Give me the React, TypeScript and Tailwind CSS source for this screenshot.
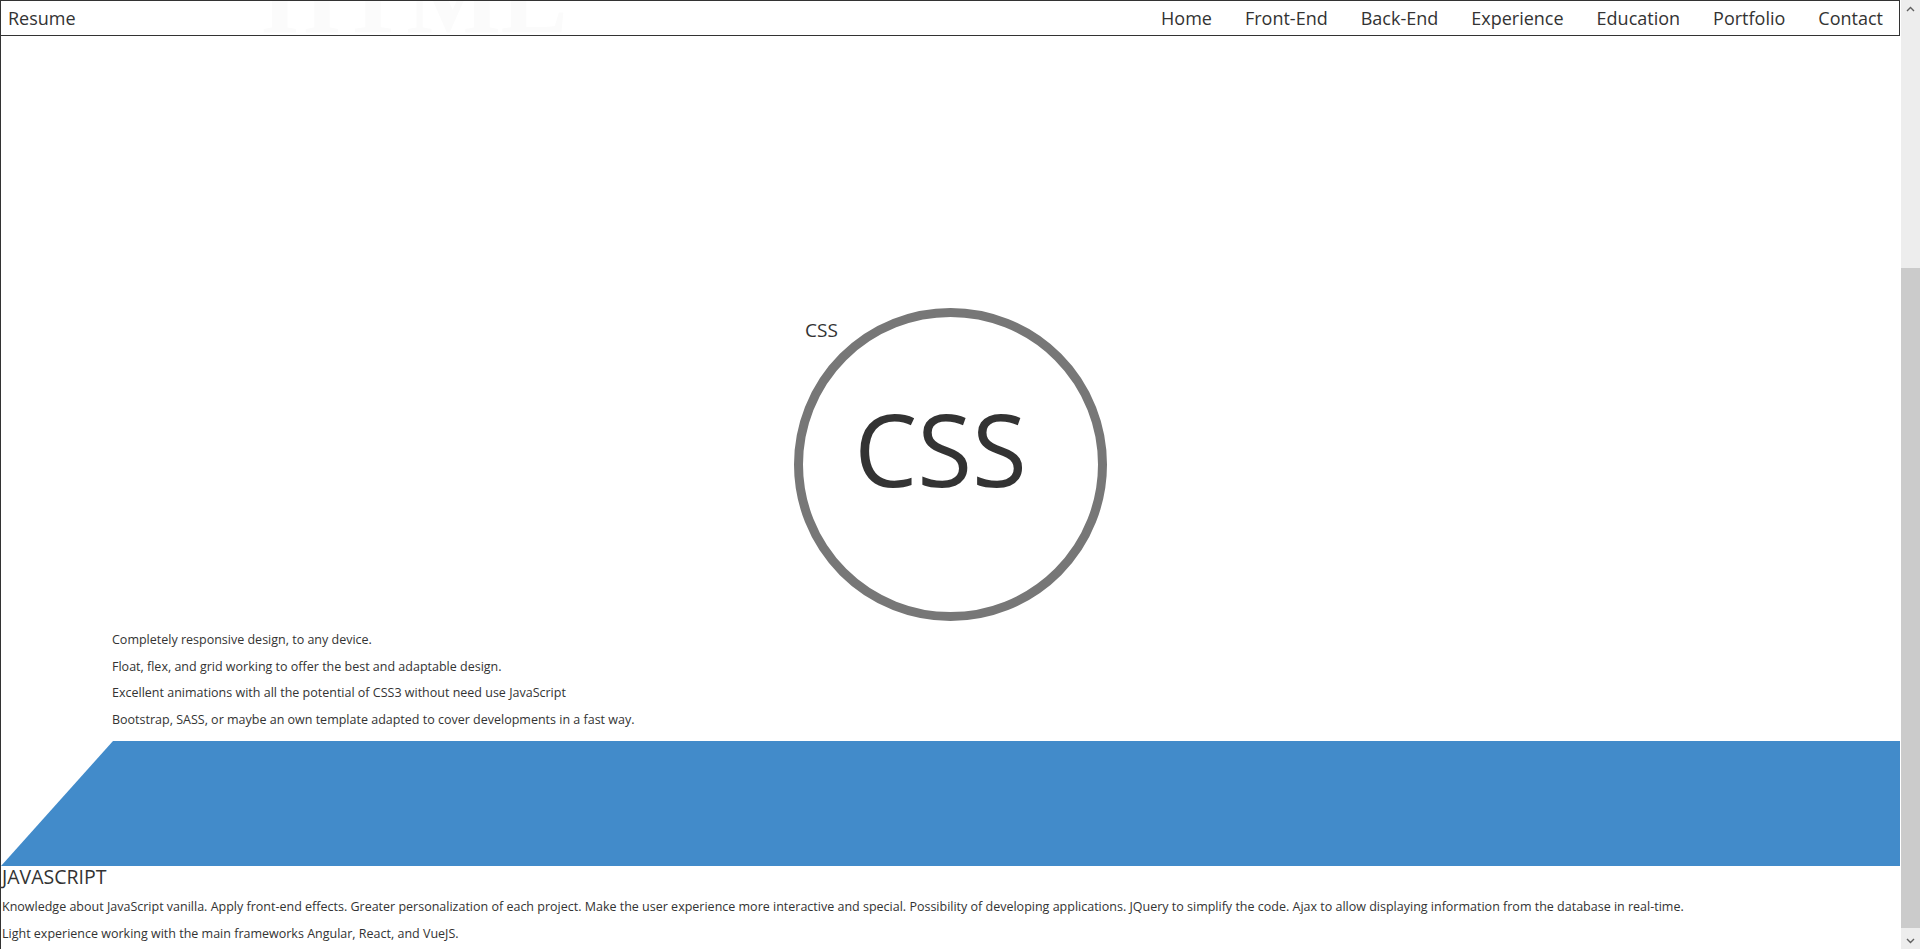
const navLinks = ['Home', 'Front-End', 'Back-End', 'Experience', 'Education', 'Portfolio', 'Contact'];

const cssPoints = [
  'Completely responsive design, to any device.',
  'Float, flex, and grid working to offer the best and adaptable design.',
  'Excellent animations with all the potential of CSS3 without need use JavaScript',
  'Bootstrap, SASS, or maybe an own template adapted to cover developments in a fast way.',
];

const Header = () => (
  <header className="relative h-[36px] border border-[#333] overflow-hidden flex items-center justify-between">
    {/* big section title scrolled under the bar */}
    <span aria-hidden="true" className="absolute left-[261px] top-[-52px] text-[100px] leading-none font-bold text-[#fbfbfb] font-['Liberation_Serif',serif] select-none">
      HTML
    </span>
    <a href="#top" className="relative pl-[7px] text-[18px] text-[#333]">
      Resume
    </a>
    <nav className="relative flex items-center text-[18px] text-[#333]">
      {navLinks.map((link) => (
        <a key={link} href={`#${link.toLowerCase()}`} className="px-[16.5px] last:pr-[16px]">
          {link}
        </a>
      ))}
    </nav>
  </header>
);

const Scrollbar = () => (
  <div className="ml-[1px] w-[19px] h-full bg-[#ededed] flex flex-col">
    <div className="h-[17px] flex items-center justify-center">
      <svg width="9" height="6" viewBox="0 0 9 6" fill="none">
        <path d="M1 5 L4.5 1.5 L8 5" stroke="#606060" strokeWidth="1.4" />
      </svg>
    </div>
    <div className="mt-[251px] h-[660px] bg-[#cbcbcb]" />
    <div className="flex-1" />
    <div className="h-[17px] flex items-center justify-center">
      <svg width="9" height="6" viewBox="0 0 9 6" fill="none">
        <path d="M1 1 L4.5 4.5 L8 1" stroke="#606060" strokeWidth="1.4" />
      </svg>
    </div>
  </div>
);

export default function App() {
  return (
    <div className="flex h-[949px] w-[1920px] overflow-hidden bg-white font-['Open_Sans','Liberation_Sans',sans-serif] text-[#333]">
      <div className="w-[1900px] h-full flex flex-col">
        <Header />

        {/* CSS skill */}
        <section className="border-l border-[#333]">
          <div className="relative mx-auto mt-[272px] w-[313px] h-[313px]">
            <span className="absolute left-[11px] top-[8px] text-[19px] text-[#333]">CSS</span>
            <div className="w-full h-full rounded-full border-[9px] border-[#777] flex items-center justify-center pb-[34px] pr-[20px]">
              <span className="text-[100px] leading-none text-[#333]">CSS</span>
            </div>
          </div>

          <ul className="mt-[6px] pl-[111px] text-[12.5px] leading-[26.5px] text-[#333]">
            {cssPoints.map((point) => (
              <li key={point}>{point}</li>
            ))}
          </ul>

          <div className="mt-[8px] h-[125px] bg-[#428bca] [clip-path:polygon(112px_0,100%_0,100%_100%,0_100%)]" />
        </section>

        {/* JavaScript skill */}
        <section className="flex-1 border-l border-[#333] pl-[1px]">
          <h2 className="text-[19.5px] leading-[22px] uppercase text-[#333]">Javascript</h2>
          <div className="mt-[4.5px] text-[12.5px] leading-[27px] text-[#333]">
            <p>
              Knowledge about JavaScript vanilla. Apply front-end effects. Greater personalization of each project. Make the user experience more interactive and special. Possibility of developing applications. JQuery to simplify the code. Ajax to allow displaying information from the database in real-time.
            </p>
            <p>Light experience working with the main frameworks Angular, React, and VueJS.</p>
          </div>
        </section>
      </div>
      <Scrollbar />
    </div>
  );
}
